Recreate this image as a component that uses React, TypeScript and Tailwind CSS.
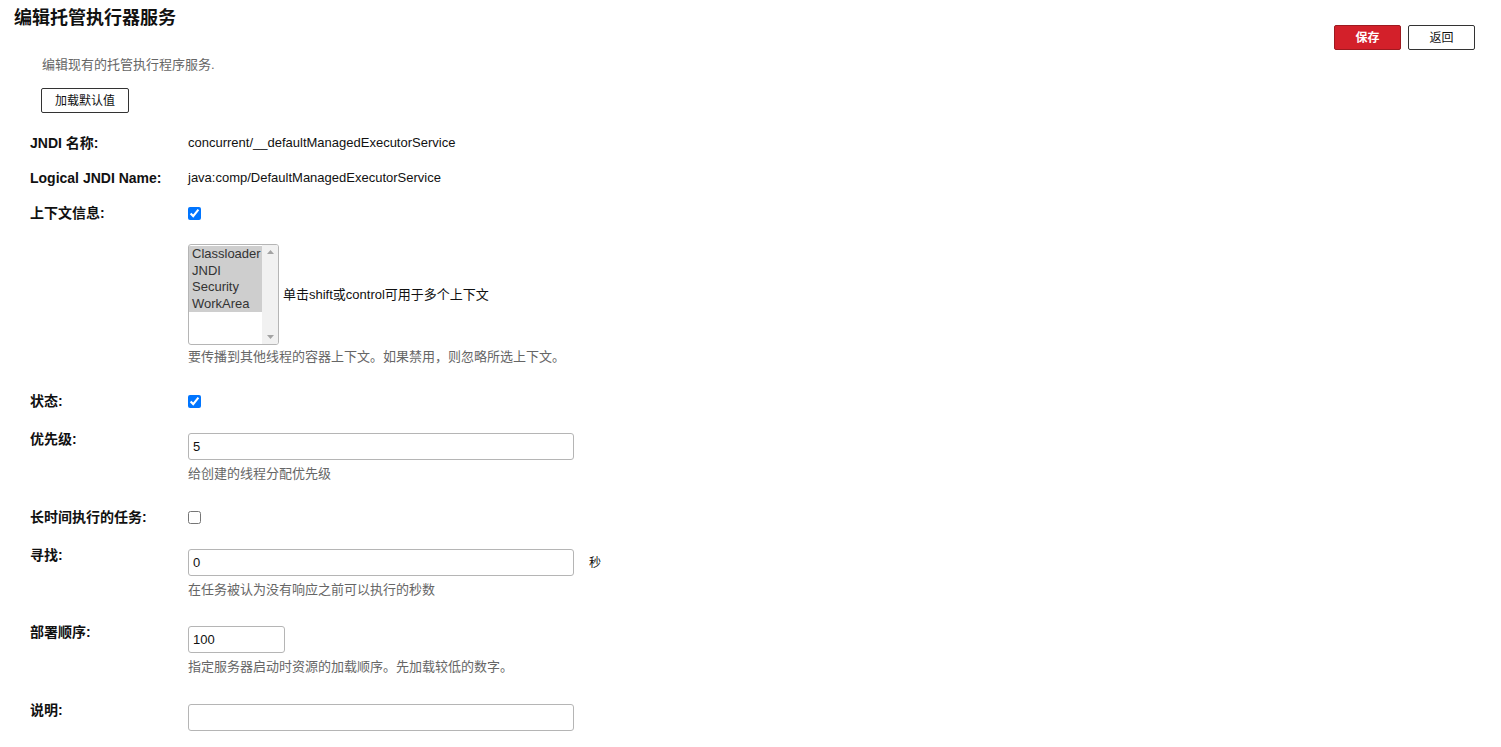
import { ReactNode } from 'react';

const font = { fontFamily: '"Liberation Sans", "Noto Sans CJK SC", sans-serif' };

function Row({ label, children, className = '' }: { label: string; children: ReactNode; className?: string }) {
  return (
    <div className={`flex items-start ${className}`}>
      <div className="w-[158px] shrink-0 text-[14px] font-bold leading-[20px] text-[#111]">{label}</div>
      <div className="flex flex-col">{children}</div>
    </div>
  );
}

function Help({ children }: { children: ReactNode }) {
  return <p className="mt-[6px] text-[13px] leading-[16px] text-[#666]">{children}</p>;
}

function TextInput({ value, width }: { value: string; width: string }) {
  return (
    <input
      defaultValue={value}
      className={`${width} mt-[4px] h-[27px] rounded-[3px] border border-[#b5b5b5] px-[4px] text-[13px] text-[#111] outline-none`}
    />
  );
}

function Check({ checked }: { checked?: boolean }) {
  return <input type="checkbox" defaultChecked={checked} className="mt-[4px] m-0 h-[13px] w-[13px] accent-[#0075ff]" />;
}

export default function App() {
  const contexts = ['Classloader', 'JNDI', 'Security', 'WorkArea'];

  return (
    <div style={font} className="min-h-screen bg-white text-[#111]">
      <div className="flex items-start justify-between">
        <div className="flex flex-col">
          <h1 className="ml-[14px] mt-[6px] text-[18px] font-bold leading-[24px]">编辑托管执行器服务</h1>
          <p className="ml-[42px] mt-[27px] text-[13px] leading-[16px] text-[#666]">编辑现有的托管执行程序服务.</p>
          <button className="ml-[41px] mt-[15px] h-[25px] w-[88px] rounded-[2px] border border-[#333] bg-white text-[12px]">
            加载默认值
          </button>
        </div>
        <div className="mr-[26px] mt-[25px] flex gap-[7px]">
          <button className="h-[25px] w-[67px] rounded-[2px] border border-[#9e1a20] bg-[#d3202a] text-[12px] font-bold text-white">保存</button>
          <button className="h-[25px] w-[67px] rounded-[2px] border border-[#333] bg-white text-[12px]">返回</button>
        </div>
      </div>

      <div className="ml-[30px] flex flex-col">
        <Row label="JNDI 名称:" className="mt-[20px]">
          <span className="text-[13px] leading-[20px]">concurrent/__defaultManagedExecutorService</span>
        </Row>
        <Row label="Logical JNDI Name:" className="mt-[15px]">
          <span className="text-[13px] leading-[20px]">java:comp/DefaultManagedExecutorService</span>
        </Row>
        <Row label="上下文信息:" className="mt-[15px]">
          <Check checked />
          <div className="ml-[-158px] mt-[24px] flex items-center pl-[158px]">
            <div className="flex h-[101px] w-[91px] overflow-hidden rounded-[3px] border border-[#b5b5b5]">
              <div className="flex flex-1 flex-col pt-[1px]">
                {contexts.map((c) => (
                  <div key={c} className="bg-[#cecece] pl-[3px] text-[13px] leading-[16.5px] text-[#333]">
                    {c}
                  </div>
                ))}
              </div>
              <div className="flex w-[16px] flex-col items-center justify-between bg-[#f1f1f1] py-[5px]">
                <svg width="7" height="4" viewBox="0 0 7 4"><path d="M3.5 0L7 4H0z" fill="#a3a3a3" /></svg>
                <svg width="7" height="4" viewBox="0 0 7 4"><path d="M0 0h7L3.5 4z" fill="#a3a3a3" /></svg>
              </div>
            </div>
            <span className="ml-[4px] text-[13px] leading-[16px]">单击shift或control可用于多个上下文</span>
          </div>
          <p className="mt-[4px] text-[13px] leading-[16px] text-[#666]">要传播到其他线程的容器上下文。如果禁用，则忽略所选上下文。</p>
        </Row>

        <Row label="状态:" className="mt-[26px]">
          <Check checked />
        </Row>

        <Row label="优先级:" className="mt-[18px]">
          <TextInput value="5" width="w-[386px]" />
          <Help>给创建的线程分配优先级</Help>
        </Row>

        <Row label="长时间执行的任务:" className="mt-[25px]">
          <Check />
        </Row>

        <Row label="寻找:" className="mt-[18px]">
          <div className="flex items-center">
            <TextInput value="0" width="w-[386px]" />
            <span className="ml-[15px] mt-[4px] text-[12px]">秒</span>
          </div>
          <Help>在任务被认为没有响应之前可以执行的秒数</Help>
        </Row>

        <Row label="部署顺序:" className="mt-[24px]">
          <TextInput value="100" width="w-[97px]" />
          <Help>指定服务器启动时资源的加载顺序。先加载较低的数字。</Help>
        </Row>

        <Row label="说明:" className="mt-[25px]">
          <TextInput value="" width="w-[386px]" />
        </Row>
      </div>
    </div>
  );
}
